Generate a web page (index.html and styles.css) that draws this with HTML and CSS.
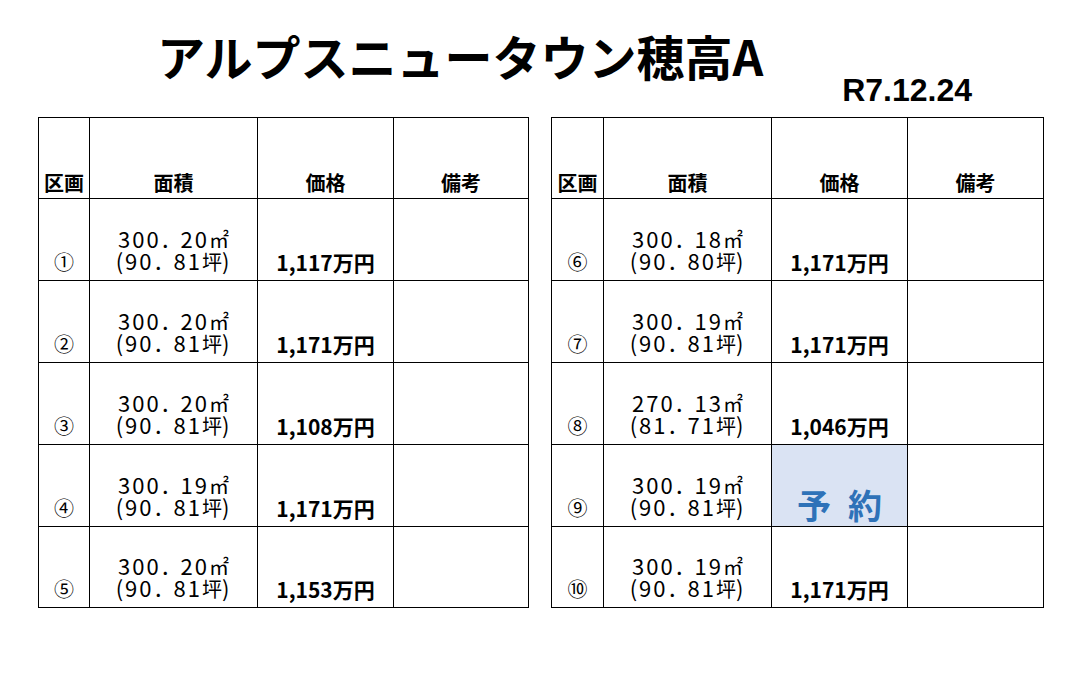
FILE: index.html
```html
<!DOCTYPE html>
<html lang="ja">
<head>
<meta charset="utf-8">
<title>アルプスニュータウン穂高A</title>
<link rel="stylesheet" href="styles.css">
</head>
<body>
<div class="header">
  <h1 class="title">アルプスニュータウン穂高A</h1>
  <div class="date">R7.12.24</div>
</div>
<div class="tables">
  <table class="lots lots-left">
    <colgroup><col class="c-no"><col class="c-area"><col class="c-price"><col class="c-note"></colgroup>
    <thead><tr class="row-head"><th class="h-no">区画</th><th>面積</th><th>価格</th><th>備考</th></tr></thead>
    <tbody>
      <tr><td class="no">①</td><td class="area"><span class="dg">300</span>．<span class="dg">20</span>㎡<br><span class="dg">(90</span>．<span class="dg">81</span>坪<span class="dg">)</span></td><td class="price">1,117万円</td><td></td></tr>
      <tr><td class="no">②</td><td class="area"><span class="dg">300</span>．<span class="dg">20</span>㎡<br><span class="dg">(90</span>．<span class="dg">81</span>坪<span class="dg">)</span></td><td class="price">1,171万円</td><td></td></tr>
      <tr><td class="no">③</td><td class="area"><span class="dg">300</span>．<span class="dg">20</span>㎡<br><span class="dg">(90</span>．<span class="dg">81</span>坪<span class="dg">)</span></td><td class="price">1,108万円</td><td></td></tr>
      <tr><td class="no">④</td><td class="area"><span class="dg">300</span>．<span class="dg">19</span>㎡<br><span class="dg">(90</span>．<span class="dg">81</span>坪<span class="dg">)</span></td><td class="price">1,171万円</td><td></td></tr>
      <tr class="row-last"><td class="no">⑤</td><td class="area"><span class="dg">300</span>．<span class="dg">20</span>㎡<br><span class="dg">(90</span>．<span class="dg">81</span>坪<span class="dg">)</span></td><td class="price">1,153万円</td><td></td></tr>
    </tbody>
  </table>
  <table class="lots lots-right">
    <colgroup><col class="c-no2"><col class="c-area"><col class="c-price"><col class="c-note2"></colgroup>
    <thead><tr class="row-head"><th class="h-no">区画</th><th>面積</th><th>価格</th><th>備考</th></tr></thead>
    <tbody>
      <tr><td class="no">⑥</td><td class="area"><span class="dg">300</span>．<span class="dg">18</span>㎡<br><span class="dg">(90</span>．<span class="dg">80</span>坪<span class="dg">)</span></td><td class="price">1,171万円</td><td></td></tr>
      <tr><td class="no">⑦</td><td class="area"><span class="dg">300</span>．<span class="dg">19</span>㎡<br><span class="dg">(90</span>．<span class="dg">81</span>坪<span class="dg">)</span></td><td class="price">1,171万円</td><td></td></tr>
      <tr><td class="no">⑧</td><td class="area"><span class="dg">270</span>．<span class="dg">13</span>㎡<br><span class="dg">(81</span>．<span class="dg">71</span>坪<span class="dg">)</span></td><td class="price">1,046万円</td><td></td></tr>
      <tr><td class="no">⑨</td><td class="area"><span class="dg">300</span>．<span class="dg">19</span>㎡<br><span class="dg">(90</span>．<span class="dg">81</span>坪<span class="dg">)</span></td><td class="reserved">予約</td><td></td></tr>
      <tr class="row-last"><td class="no">⑩</td><td class="area"><span class="dg">300</span>．<span class="dg">19</span>㎡<br><span class="dg">(90</span>．<span class="dg">81</span>坪<span class="dg">)</span></td><td class="price">1,171万円</td><td></td></tr>
    </tbody>
  </table>
</div>
</body>
</html>
```
FILE: styles.css
```css
html, body {
  margin: 0;
  padding: 0;
  background: #fff;
  color: #000;
  font-family: "Noto Sans CJK JP", sans-serif;
}

.header {
  display: flex;
  align-items: flex-start;
  height: 117px;
}

.title {
  margin: 31px 0 0 157px;
  font-size: 48px;
  line-height: 48px;
  font-weight: 700;
  white-space: nowrap;
}

.date {
  margin: 74px 109px 0 auto;
  font-family: "Liberation Sans", Arial, sans-serif;
  font-size: 32px;
  line-height: 32px;
  font-weight: 700;
}

.tables {
  display: flex;
  align-items: flex-start;
  gap: 22px;
  padding-left: 38px;
}

.lots {
  border-collapse: separate;
  border-spacing: 1px;
  background: #000;
  table-layout: fixed;
}

.lots-left { width: 491px; }
.lots-right { width: 493px; }

.c-no { width: 50px; }
.c-no2 { width: 51px; }
.c-area { width: 167px; }
.c-price { width: 135px; }
.c-note { width: 134px; }
.c-note2 { width: 135px; }

.lots tr { height: 81px; }
.lots tr.row-head { height: 80px; }
.lots tr.row-last { height: 80px; }

.lots th,
.lots td {
  background: #fff;
  padding: 0;
  vertical-align: bottom;
  text-align: center;
  white-space: nowrap;
}

.lots th {
  font-size: 20px;
  line-height: 20px;
  font-weight: 700;
  padding-bottom: 5px;
}

.lots td.no {
  font-size: 20px;
  line-height: 21px;
  padding-bottom: 8px;
}

.lots td.area {
  font-size: 20px;
  line-height: 21px;
  padding-bottom: 8px;
}

.dg {
  font-size: 22px;
  letter-spacing: 2px;
}

.lots td.price {
  font-size: 21px;
  line-height: 21px;
  font-weight: 700;
  padding-bottom: 7px;
}

.lots td.reserved {
  background: #dae3f3;
  color: #2e72b8;
  font-size: 34px;
  line-height: 34px;
  font-weight: 700;
  letter-spacing: 17px;
  padding-left: 17px;
  padding-bottom: 4px;
}
```
